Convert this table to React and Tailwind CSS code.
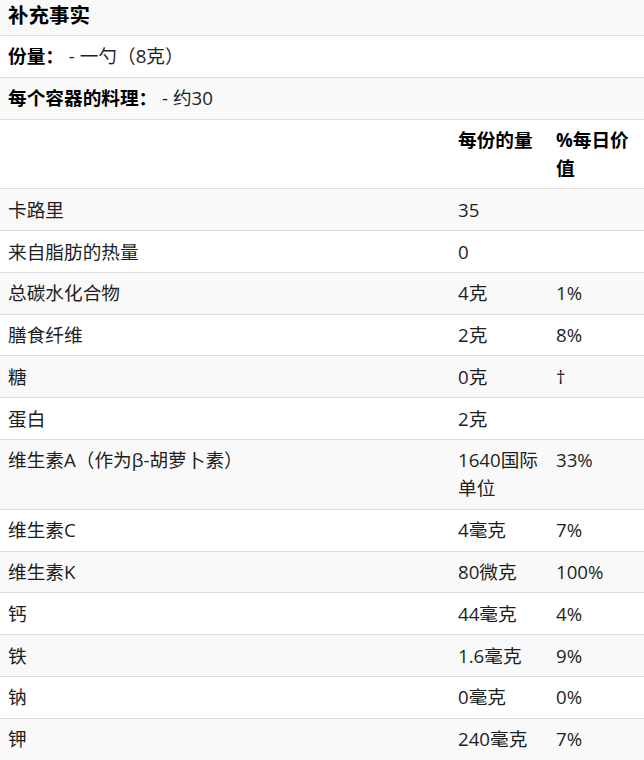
import React from "react";

const rows = [
  ["卡路里", "35", ""],
  ["来自脂肪的热量", "0", ""],
  ["总碳水化合物", "4克", "1%"],
  ["膳食纤维", "2克", "8%"],
  ["糖", "0克", "†"],
  ["蛋白", "2克", ""],
  ["维生素A（作为β-胡萝卜素）", "1640国际单位", "33%"],
  ["维生素C", "4毫克", "7%"],
  ["维生素K", "80微克", "100%"],
  ["钙", "44毫克", "4%"],
  ["铁", "1.6毫克", "9%"],
  ["钠", "0毫克", "0%"],
  ["钾", "240毫克", "7%"],
];

export default function App() {
  return (
    <div
      className="w-[644px] bg-white text-[18.67px] leading-[28px] text-[#1e1e1e]"
      style={{ fontFamily: '"Open Sans", "Noto Sans CJK SC", sans-serif' }}
    >
      <div className="bg-[#f9f9f9] border-b border-[#dddddd] px-2 pt-[1px] pb-[6px] text-[20.5px] font-bold text-black">
        补充事实
      </div>
      <div className="bg-white border-b border-[#dddddd] px-2 py-[6.4px]">
        <span className="font-bold text-black">份量：</span> - 一勺（8克）
      </div>
      <div className="bg-[#f9f9f9] border-b border-[#dddddd] px-2 py-[6.4px]">
        <span className="font-bold text-black">每个容器的料理：</span> - 约30
      </div>
      <div className="grid grid-cols-[450px_98px_96px] bg-white border-b border-[#dddddd]">
        <div className="px-2 py-[6.4px]"></div>
        <div className="px-2 py-[6.4px] font-bold text-black">每份的量</div>
        <div className="px-2 py-[6.4px] font-bold text-black">%每日价值</div>
      </div>
      {rows.map((r, i) => (
        <div
          key={i}
          className={`grid grid-cols-[450px_98px_96px] border-b border-[#dddddd] ${
            i % 2 === 0 ? "bg-[#f9f9f9]" : "bg-white"
          }`}
        >
          <div className="px-2 py-[6.4px]">{r[0]}</div>
          <div className="px-2 py-[6.4px]">{r[1]}</div>
          <div className="px-2 py-[6.4px]">{r[2]}</div>
        </div>
      ))}
    </div>
  );
}
